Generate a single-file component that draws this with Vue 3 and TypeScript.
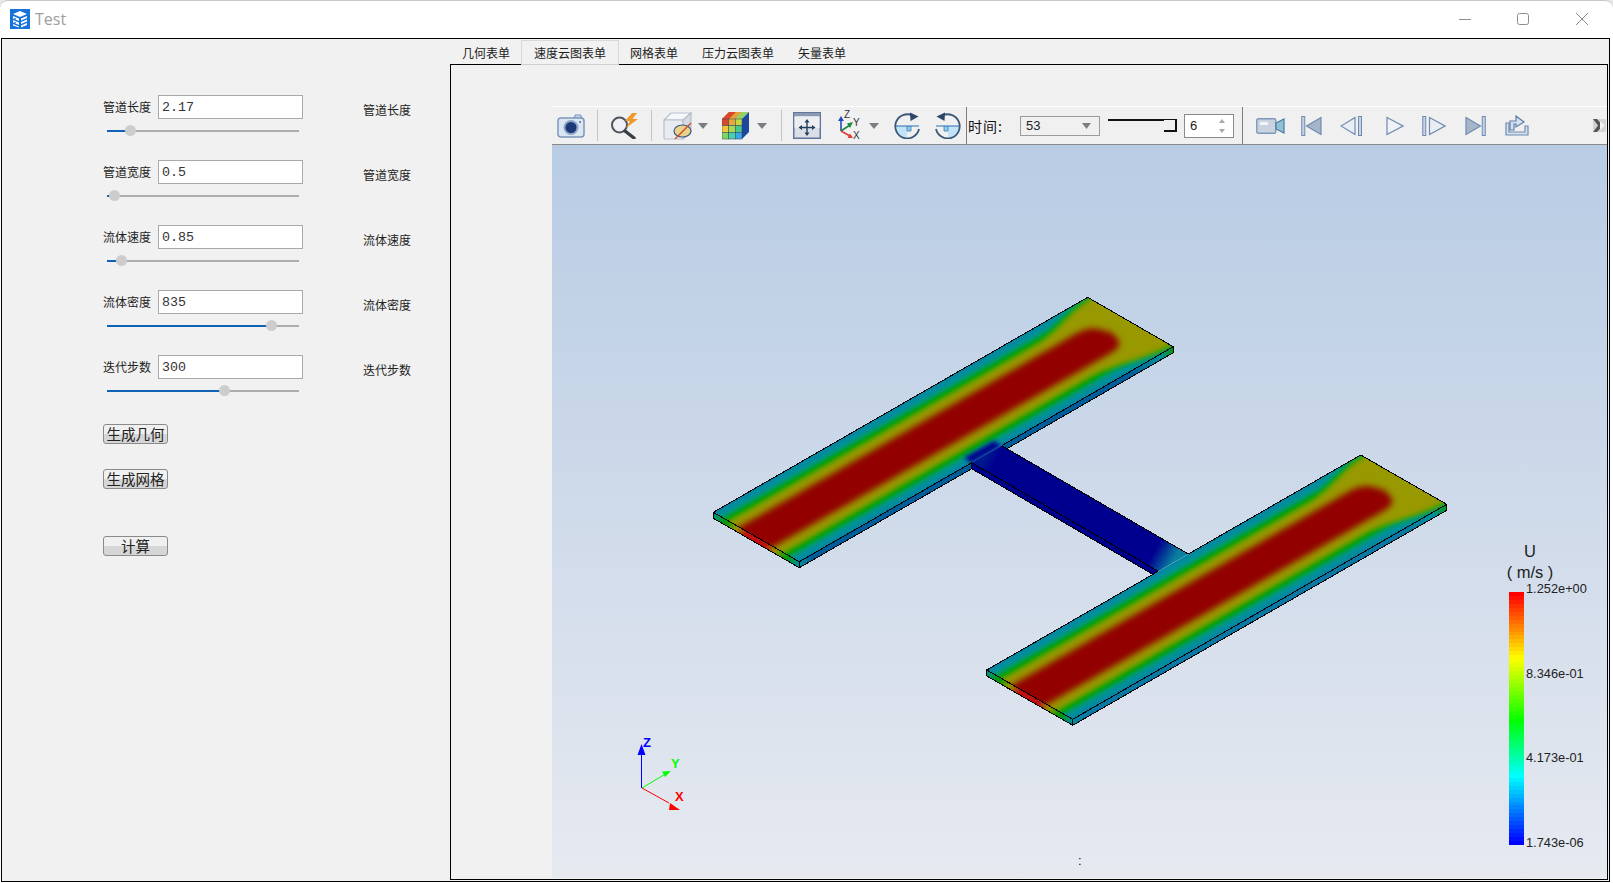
<script setup lang="ts">
type Pt = [number, number]

const params = [
  { name: '管道长度', value: '2.17', pct: 12 },
  { name: '管道宽度', value: '0.5', pct: 3.6 },
  { name: '流体速度', value: '0.85', pct: 7.3 },
  { name: '流体密度', value: '835', pct: 85.4 },
  { name: '迭代步数', value: '300', pct: 61 },
]

const tabs = ['几何表单', '速度云图表单', '网格表单', '压力云图表单', '矢量表单']
const activeTab = 1

const legendLabels = ['1.252e+00', '8.346e-01', '4.173e-01', '1.743e-06']

// colour bar, stepped like the vtk lookup table
const barStops: [number, number[]][] = [
  [0, [0, 0, 255]],
  [0.27, [0, 255, 255]],
  [0.49, [0, 255, 0]],
  [0.74, [255, 255, 0]],
  [1, [255, 0, 0]],
]

function barColor(t: number) {
  for (let i = 1; i < barStops.length; i++) {
    const [t1, c1] = barStops[i]
    const [t0, c0] = barStops[i - 1]
    if (t <= t1) {
      const k = (t - t0) / (t1 - t0)
      const c = c0.map((v, j) => Math.round(v + (c1[j] - v) * k))
      return `rgb(${c[0]}, ${c[1]}, ${c[2]})`
    }
  }
  return 'rgb(255, 0, 0)'
}

const barBands = Array.from({ length: 64 }, (_, i) => barColor(1 - i / 63))

const cubeCells = [
  '#d8492c', '#e8a838', '#c6d848',
  '#f2c63c', '#a6dc50', '#48c88c',
  '#7cd85c', '#48d0a8', '#38a8e8',
]

const mix = (a: number, b: number, k: number) => a + (b - a) * k
function smooth(a: number, b: number, u: number) {
  const k = Math.min(Math.max((u - a) / (b - a), 0), 1)
  return k * k * (3 - 2 * k)
}

// band edges measured from the long wall, u along the channel, v across it
const heatLayers: { color: string; edge: (u: number) => number }[] = [
  { color: '#008f9e', edge: (u) => mix(0.015, -0.06, smooth(0.85, 0.95, u)) },
  { color: '#00a000', edge: (u) => mix(0.095, -0.02, smooth(0.85, 1, u)) },
  { color: '#989800', edge: (u) => mix(0.195, 0.05, smooth(0.82, 1, u)) },
  {
    color: '#920000',
    edge: (u) => {
      if (u < 0.89) return 0.3
      if (u > 0.945) return 0.5
      const k = (u - 0.89) / 0.055
      return 0.3 + 0.2 * (1 - Math.cbrt(1 - k * k * k))
    },
  },
]

function makePlate(o: Pt, long: Pt, short: Pt) {
  const at = (u: number, v: number): Pt => [
    o[0] + long[0] * u + short[0] * v,
    o[1] + long[1] * u + short[1] * v,
  ]
  const str = (pts: Pt[]) => pts.map((p) => `${p[0].toFixed(1)},${p[1].toFixed(1)}`).join(' ')
  const layers = heatLayers.map((layer) => {
    const upper: Pt[] = []
    const lower: Pt[] = []
    for (let i = -5; i <= 105; i++) {
      const u = i / 100
      upper.push(at(u, layer.edge(u)))
      lower.unshift(at(u, 1 - layer.edge(u)))
    }
    return { color: layer.color, points: str([...upper, ...lower]) }
  })
  const corner = { o: at(0, 0), far: at(1, 0), right: at(1, 1), near: at(0, 1) }
  const drop = (p: Pt): Pt => [p[0], p[1] + 6]
  return {
    bands: layers.slice(0, 3),
    core: layers[3],
    corner,
    top: str([corner.o, corner.far, corner.right, corner.near]),
    endFace: str([corner.o, corner.near, drop(corner.near), drop(corner.o)]),
    wallFace: str([corner.near, corner.right, drop(corner.right), drop(corner.near)]),
  }
}

const plates = [
  {
    ...makePlate([713.3, 512.3], [374.4, -215], [86, 49.4]),
    wall: '#005d9c',
    lines:
      'M713.3 512.3 L1087.7 297.3 L1173.3 346.7 V352.7 L1001.7 451.7 M1173.3 346.7 L1001.7 445.7 M971.7 462.7 L799.3 561.7 L713.3 512.3 V518.3 L799.3 567.7 V561.7 M799.3 567.7 L971.7 468.7',
  },
  {
    ...makePlate([986.7, 670], [374, -215], [86, 49.3]),
    wall: '#0a78a4',
    lines:
      'M986.7 670 L1158.3 571.3 M1188.3 554 L1360.7 455 L1446.7 504.3 V510.3 L1072.7 725.3 L986.7 676 V670 L1072.7 719.3 L1446.7 504.3 M1072.7 719.3 V725.3',
  },
]
</script>

<template>
  <div class="window">
    <header class="titlebar">
      <svg class="logo" width="20" height="20" viewBox="0 0 20 20">
        <rect width="20" height="20" fill="#1673dc" />
        <path d="M3 5 L10 2 L17 5 L10 8 Z" fill="#fff" />
        <path d="M3 7 L9 9.5 V12 L3 9.5 Z M3 11 L9 13.5 V16 L3 13.5 Z M3 15 L9 17.5 V18.5 L3 16.5 Z" fill="#fff" />
        <path d="M11 9.5 L17 7 V9 L11 11.5 Z M11 13 L17 10.5 V12.5 L11 15 Z M11 16.5 L17 14 V16 L11 18.5 Z" fill="#fff" />
        <path d="M5 9 V10.5 M5 13 V14.5" stroke="#1673dc" stroke-width="1.4" />
      </svg>
      <span class="app-title">Test</span>
      <div class="win-controls">
        <svg width="12" height="12" viewBox="0 0 12 12" class="win-min">
          <path d="M0 6.5 H12" stroke="#8c8c8c" stroke-width="1" />
        </svg>
        <svg width="12" height="12" viewBox="0 0 12 12" class="win-max">
          <rect x="0.5" y="0.5" width="11" height="11" rx="2" fill="none" stroke="#8c8c8c" />
        </svg>
        <svg width="12" height="12" viewBox="0 0 12 12" class="win-close">
          <path d="M0 0 L12 12 M12 0 L0 12" stroke="#8c8c8c" stroke-width="1" />
        </svg>
      </div>
    </header>

    <div class="frame">
      <aside class="panel">
        <div v-for="p in params" :key="p.name" class="param">
          <label class="param-label">{{ p.name }}</label>
          <input class="param-input" :value="p.value" />
          <span class="param-side">{{ p.name }}</span>
          <div class="slider">
            <div class="slider-fill" :style="{ width: p.pct + '%' }"></div>
            <div class="slider-thumb" :style="{ left: p.pct + '%' }"></div>
          </div>
        </div>
        <button type="button" class="action action-geo">生成几何</button>
        <button type="button" class="action action-mesh">生成网格</button>
        <button type="button" class="action action-run">计算</button>
      </aside>

      <section class="workspace">
        <nav class="tabs">
          <div
            v-for="(tab, idx) in tabs"
            :key="tab"
            class="tab"
            :class="{ 'tab--active': idx === activeTab }"
          >
            {{ tab }}
          </div>
        </nav>

        <div class="pane">
          <div class="toolbar">
            <!-- camera -->
            <svg class="t-camera" width="28" height="24" viewBox="0 0 28 24">
              <path d="M17 4 L18.5 1 H23.5 L25 4" fill="#c5d5e9" stroke="#7c97bb" stroke-width="1.2" />
              <rect x="1" y="4" width="26" height="19" rx="3" fill="#dbe6f3" stroke="#7c97bb" stroke-width="1.5" />
              <circle cx="14" cy="13.5" r="7.5" fill="#8ea6c8" />
              <circle cx="14" cy="13.5" r="5.5" fill="#1c3a78" />
              <circle cx="23" cy="8" r="1" fill="#55708f" />
            </svg>
            <i class="sep t-sep1"></i>
            <!-- search with bolt -->
            <svg class="t-search" width="29" height="26" viewBox="0 0 29 26">
              <circle cx="9.5" cy="12" r="7.5" fill="#eef2f6" stroke="#50555b" stroke-width="2" />
              <path d="M15 18 L24 25" stroke="#3a3f45" stroke-width="3.4" stroke-linecap="round" />
              <path d="M22 0 L15 8 L20 8 L16 15 L28 6 L22.5 6 L27 0 Z" fill="#ee9a2a" />
            </svg>
            <i class="sep t-sep2"></i>
            <!-- clipped cube -->
            <svg class="t-cube" width="29" height="28" viewBox="0 0 29 28">
              <path d="M1 8 L8 1 H28 L20 8 Z" fill="#f6f7f9" stroke="#b7bfcd" stroke-width="1.2" />
              <path d="M20 8 L28 1 V20 L20 27 Z" fill="#d5d9e2" stroke="#b7bfcd" stroke-width="1.2" />
              <rect x="1" y="8" width="19" height="19" rx="1" fill="#e8ebf0" stroke="#b7bfcd" stroke-width="1.2" />
              <ellipse cx="19.5" cy="19" rx="8.5" ry="6" fill="#ebd28a" stroke="#3f5b86" stroke-width="1.2" />
              <path d="M12 27 L28 11" stroke="#c8482a" stroke-width="1.3" />
            </svg>
            <svg class="t-drop1" width="10" height="6" viewBox="0 0 10 6"><path d="M0 0 H10 L5 6 Z" fill="#7a7d82" /></svg>
            <!-- colour cube -->
            <svg class="t-colorcube" width="27" height="28" viewBox="0 0 27 28">
              <path d="M0 7 L7 0 H27 L20 7 Z" fill="#e2a23a" />
              <path d="M7 0 H14 L7 7 H0 Z" fill="#d8492c" />
              <path d="M20 0 H27 L20 7 H13 Z" fill="#8ed46a" />
              <path d="M20 7 L27 0 V20 L20 27 Z" fill="#1d48a0" />
              <rect
                v-for="(c, i) in cubeCells"
                :key="i"
                :x="(i % 3) * 6.67"
                :y="7 + Math.floor(i / 3) * 6.67"
                width="6.67"
                height="6.67"
                :fill="c"
                stroke="#37425a"
                stroke-width="0.5"
              />
            </svg>
            <svg class="t-drop2" width="10" height="6" viewBox="0 0 10 6"><path d="M0 0 H10 L5 6 Z" fill="#7a7d82" /></svg>
            <i class="sep t-sep3"></i>
            <!-- fit view -->
            <svg class="t-frame" width="28" height="27" viewBox="0 0 28 27">
              <rect x="0.75" y="0.75" width="26.5" height="25.5" fill="#dadee6" stroke="#61759a" stroke-width="1.5" />
              <rect x="1" y="1" width="26" height="3" fill="#8a9ab5" />
              <rect x="1.5" y="5" width="25" height="11" fill="#eceef2" />
              <path d="M14 9 V22 M7.5 15.5 H20.5" stroke="#24405f" stroke-width="1.4" />
              <path d="M14 7 L11.5 10.5 H16.5 Z M14 24 L11.5 20.5 H16.5 Z M5.5 15.5 L9 13 V18 Z M22.5 15.5 L19 13 V18 Z" fill="#24405f" />
            </svg>
            <!-- axes -->
            <svg class="t-axes" width="24" height="34" viewBox="0 -3 24 34">
              <path d="M3 20 V8" stroke="#1e4fb8" stroke-width="1.6" />
              <path d="M3 5 L0 10 H6 Z" fill="#1e4fb8" />
              <path d="M3 20 L12 14" stroke="#178a3c" stroke-width="1.6" />
              <path d="M15 11 L9 12.5 L12 17 Z" fill="#178a3c" />
              <path d="M3 20 L12 25" stroke="#e23b3b" stroke-width="1.6" />
              <path d="M15 27 L9.5 27 L12 22.5 Z" fill="#e23b3b" />
              <text x="6" y="7" class="axis-mini">Z</text>
              <text x="15" y="15" class="axis-mini">Y</text>
              <text x="15" y="28" class="axis-mini">X</text>
            </svg>
            <svg class="t-drop3" width="10" height="6" viewBox="0 0 10 6"><path d="M0 0 H10 L5 6 Z" fill="#7a7d82" /></svg>
            <!-- rotate cw / ccw -->
            <svg class="t-rot1" width="26" height="27" viewBox="0 0 26 27">
              <path d="M1 14 H13 V26 A12 12 0 0 1 1 14 Z" fill="#c2e2f6" />
              <path d="M13 14 V19 H17 V14" fill="#8fc8ec" stroke="#3a82bc" stroke-width="0.8" />
              <path d="M1 14 H25" stroke="#2a6fb0" stroke-width="1.2" />
              <path d="M25 17 A12 12 0 1 1 18.5 3.5" fill="none" stroke="#3c5878" stroke-width="1.8" />
              <path d="M16 0.5 L24.5 4.5 L16.5 9 Z" fill="#2c4668" />
            </svg>
            <svg class="t-rot2" width="26" height="27" viewBox="0 0 26 27">
              <path d="M25 14 H13 V26 A12 12 0 0 0 25 14 Z" fill="#c2e2f6" />
              <path d="M13 14 V19 H9 V14" fill="#8fc8ec" stroke="#3a82bc" stroke-width="0.8" />
              <path d="M1 14 H25" stroke="#2a6fb0" stroke-width="1.2" />
              <path d="M1 17 A12 12 0 1 0 7.5 3.5" fill="none" stroke="#3c5878" stroke-width="1.8" />
              <path d="M10 0.5 L1.5 4.5 L9.5 9 Z" fill="#2c4668" />
            </svg>
            <i class="sep-dark t-sep4"></i>
            <span class="time-label">时间:</span>
            <div class="combo">
              <span>53</span>
              <svg width="9" height="6" viewBox="0 0 9 6"><path d="M0 0 H9 L4.5 6 Z" fill="#808080" /></svg>
            </div>
            <div class="mini-slider"><div class="mini-handle"></div></div>
            <div class="spin">
              <span>6</span>
              <svg width="6" height="14" viewBox="0 0 6 14">
                <path d="M3 0 L6 4 H0 Z M3 14 L6 10 H0 Z" fill="#a8a8a8" />
              </svg>
            </div>
            <i class="sep-dark t-sep5"></i>
            <!-- playback -->
            <svg class="t-record" width="29" height="16" viewBox="0 0 29 16">
              <rect x="0.75" y="0.75" width="19" height="14.5" rx="1.5" fill="#c9d2de" stroke="#7e98ba" stroke-width="1.4" />
              <rect x="4" y="4" width="8" height="3" fill="#f2f5f9" />
              <path d="M20 5 L28 1 V15 L20 11 Z" fill="#8fc0d4" stroke="#4d7a9f" stroke-width="1.2" />
            </svg>
            <svg class="t-first" width="21" height="20" viewBox="0 0 21 20">
              <rect x="0.75" y="0.5" width="3" height="19" fill="#c6d3e4" stroke="#6f8bb0" />
              <path d="M20 1.5 L5.5 10 L20 18.5 Z" fill="#a6b5c8" stroke="#6f8bb0" stroke-width="1.2" />
            </svg>
            <svg class="t-prev" width="23" height="20" viewBox="0 0 23 20">
              <path d="M15 1.5 L1 10 L15 18.5 Z" fill="#e9eef5" stroke="#6f8bb0" stroke-width="1.2" />
              <rect x="18.5" y="0.5" width="3" height="19" fill="#c6d3e4" stroke="#6f8bb0" />
            </svg>
            <svg class="t-play" width="18" height="20" viewBox="0 0 18 20">
              <path d="M1 1.5 L17 10 L1 18.5 Z" fill="#eef2f7" stroke="#6f8bb0" stroke-width="1.2" />
            </svg>
            <svg class="t-next" width="24" height="20" viewBox="0 0 24 20">
              <rect x="0.75" y="0.5" width="3" height="19" fill="#c6d3e4" stroke="#6f8bb0" />
              <path d="M7.5 1.5 L23 10 L7.5 18.5 Z" fill="#e9eef5" stroke="#6f8bb0" stroke-width="1.2" />
            </svg>
            <svg class="t-last" width="21" height="20" viewBox="0 0 21 20">
              <path d="M1 1.5 L15.5 10 L1 18.5 Z" fill="#a6b5c8" stroke="#6f8bb0" stroke-width="1.2" />
              <rect x="17.25" y="0.5" width="3" height="19" fill="#c6d3e4" stroke="#6f8bb0" />
            </svg>
            <svg class="t-export" width="24" height="21" viewBox="0 0 24 21">
              <path d="M1 8 H4 V17 H20 V11 H23 V20 H1 Z" fill="#d5e0ed" stroke="#6f8bb0" stroke-width="1.2" />
              <path d="M5 15 V6 H11 V1 L19 7 L11 12 V9 H9 V15 Z" fill="#d5e0ed" stroke="#5f7ea8" stroke-width="1.2" />
            </svg>
            <svg class="t-more" width="13" height="13" viewBox="0 0 13 13">
              <rect width="13" height="13" fill="#d4d4d4" />
              <path d="M0 0 H4 L10 6.5 L4 13 H0 L5 6.5 Z" fill="#555" />
              <path d="M7 2 L12 6.5 L7 11 Z" fill="#f2f2f2" />
            </svg>
          </div>

          <div class="viewport">
            <svg class="scene" viewBox="552 145 1055 733">
              <defs>
                <filter id="soft" x="-10%" y="-10%" width="120%" height="120%">
                  <feGaussianBlur stdDeviation="1.9" />
                </filter>
                <filter id="softer" x="-10%" y="-10%" width="120%" height="120%">
                  <feGaussianBlur stdDeviation="3.4" />
                </filter>
                <clipPath v-for="(plate, i) in plates" :id="'plate-clip-' + i" :key="i">
                  <polygon :points="plate.top" />
                </clipPath>
                <linearGradient
                  v-for="(plate, i) in plates"
                  :id="'end-grad-' + i"
                  :key="'end' + i"
                  gradientUnits="userSpaceOnUse"
                  :x1="plate.corner.o[0]"
                  :y1="plate.corner.o[1]"
                  :x2="plate.corner.near[0]"
                  :y2="plate.corner.near[1]"
                >
                  <stop offset="0" stop-color="#008e9c" />
                  <stop offset="0.16" stop-color="#009a00" />
                  <stop offset="0.28" stop-color="#949600" />
                  <stop offset="0.4" stop-color="#c01010" />
                  <stop offset="0.62" stop-color="#c01010" />
                  <stop offset="0.74" stop-color="#949600" />
                  <stop offset="0.86" stop-color="#009a00" />
                  <stop offset="1" stop-color="#008e9c" />
                </linearGradient>
                <linearGradient
                  v-for="(plate, i) in plates"
                  :id="'wall-grad-' + i"
                  :key="'wall' + i"
                  gradientUnits="userSpaceOnUse"
                  :x1="plate.corner.near[0]"
                  :y1="plate.corner.near[1]"
                  :x2="plate.corner.right[0]"
                  :y2="plate.corner.right[1]"
                >
                  <stop offset="0" stop-color="#008a9c" />
                  <stop offset="0.03" :stop-color="plate.wall" />
                  <stop offset="0.88" :stop-color="plate.wall" />
                  <stop offset="0.96" stop-color="#008e9c" />
                  <stop offset="1" stop-color="#009a00" />
                </linearGradient>
                <linearGradient id="link-grad" gradientUnits="userSpaceOnUse" x1="987" y1="455" x2="1173" y2="562">
                  <stop offset="0" stop-color="#00188f" />
                  <stop offset="0.05" stop-color="#00008f" />
                  <stop offset="0.9" stop-color="#00008f" />
                  <stop offset="1" stop-color="#0a80a0" />
                </linearGradient>
              </defs>

              <template v-for="(plate, i) in plates" :key="i">
                <polygon :points="plate.endFace" :fill="`url(#end-grad-${i})`" />
                <polygon :points="plate.wallFace" :fill="`url(#wall-grad-${i})`" />
                <g :clip-path="`url(#plate-clip-${i})`">
                  <polygon :points="plate.top" fill="#0a7ca2" />
                  <g filter="url(#soft)">
                    <polygon v-for="l in plate.bands" :key="l.color" :points="l.points" :fill="l.color" />
                  </g>
                  <polygon :points="plate.core.points" :fill="plate.core.color" filter="url(#softer)" />
                  <polygon
                    v-if="i === 0"
                    points="1001.7,445.7 971.7,462.7 964,458 994,441"
                    fill="#00008f"
                    filter="url(#soft)"
                  />
                </g>
                <path class="edge" :d="plate.lines" />
                <template v-if="i === 0">
                  <polygon points="971.7,462.7 1158.3,571.3 1153,574.4 971.7,468.7" fill="#00008f" />
                  <polygon points="1001.7,445.7 1188.3,554 1158.3,571.3 971.7,462.7" fill="url(#link-grad)" />
                  <path class="edge" d="M1001.7 445.7 L1188.3 554 M971.7 462.7 L1158.3 571.3 M971.7 462.7 V468.7 L1153 574.4" />
                </template>
              </template>

              <!-- orientation triad -->
              <path d="M641.5 788 V752" stroke="#0000ff" stroke-width="1" />
              <path d="M641.5 744 L637.5 755 H645.5 Z" fill="#0000ff" />
              <path d="M642 788 L667 773" stroke="#00ff00" stroke-width="1" />
              <path d="M671 771 L662 771.5 L665 777 Z" fill="#00ff00" />
              <path d="M642 788 L669 803" stroke="#ff0000" stroke-width="1" />
              <path d="M680 810 L670 803 L669 810 Z" fill="#ff0000" />
              <text x="643" y="747" class="axis-label" fill="#0000ff">Z</text>
              <text x="671" y="768" class="axis-label" fill="#00ff00">Y</text>
              <text x="675" y="801" class="axis-label" fill="#ff0000">X</text>
            </svg>

            <div class="legend">
              <div class="legend-title">U<br />( m/s )</div>
              <div class="legend-body">
                <div class="legend-bar">
                  <div v-for="(c, i) in barBands" :key="i" class="legend-band" :style="{ background: c }"></div>
                </div>
                <div class="legend-labels">
                  <span v-for="l in legendLabels" :key="l">{{ l }}</span>
                </div>
              </div>
            </div>
            <span class="status-mark">:</span>
          </div>
        </div>
      </section>
    </div>
  </div>
</template>

<style scoped>
.window {
  width: 1613px;
  height: 883px;
  box-sizing: border-box;
  display: flex;
  flex-direction: column;
  background: #fff;
  border-top: 1px solid #c9c9c9;
  border-radius: 8px 8px 0 0;
  overflow: hidden;
  font-family: "Noto Sans CJK SC", "Liberation Sans", sans-serif;
}

.titlebar {
  height: 37px;
  flex: none;
  display: flex;
  align-items: center;
  padding-left: 10px;
}

.logo {
  margin-top: -1px;
}

.app-title {
  margin-left: 5px;
  font-family: "Open Sans", sans-serif;
  font-size: 16px;
  color: #a0a0a0;
  margin-top: -1px;
}

.win-controls {
  margin-left: auto;
  display: flex;
  align-items: center;
  margin-top: -1px;
}

.win-min {
  margin-right: 46px;
}

.win-max {
  margin-right: 47px;
}

.win-close {
  margin-right: 25px;
}

.frame {
  flex: 1;
  min-height: 0;
  display: flex;
  margin: 0 3px 1px 1px;
  border: 1px solid #000;
  background: #f1f1f1;
}

.panel {
  width: 448px;
  flex: none;
  box-sizing: border-box;
  padding: 56px 0 0 101px;
  display: flex;
  flex-direction: column;
  align-items: flex-start;
}

.param {
  height: 65px;
  display: grid;
  grid-template-columns: 55px 145px auto;
  grid-template-rows: 24px auto;
  align-items: center;
}

.param-label,
.param-side {
  font-size: 12px;
  color: #222;
  line-height: 24px;
}

.param-side {
  margin-left: 60px;
  padding-top: 6px;
}

.param-input {
  box-sizing: border-box;
  width: 145px;
  height: 24px;
  padding: 0 0 0 3px;
  border: 1px solid #a9a9a9;
  border-radius: 0;
  outline: none;
  background: #fff;
  font-family: "Liberation Mono", monospace;
  font-size: 13.33px;
  color: #333;
}

.slider {
  grid-column: 1 / 3;
  position: relative;
  width: 192px;
  height: 2px;
  margin: 11px 0 0 4px;
  background: #adadad;
  align-self: start;
}

.slider-fill {
  height: 100%;
  background: #0f62b5;
}

.slider-thumb {
  position: absolute;
  top: -5px;
  width: 11px;
  height: 11px;
  margin-left: -5px;
  border-radius: 50%;
  background: #cdcdcd;
}

.action {
  box-sizing: border-box;
  width: 65px;
  height: 20px;
  padding: 0;
  border: 1px solid #8a8a8a;
  border-radius: 3px;
  background: linear-gradient(#f0f0f0 50%, #d6d6d6 50%);
  font-family: "Noto Sans CJK SC", sans-serif;
  font-size: 14.5px;
  line-height: 18px;
  color: #222;
}

.action-geo {
  margin-top: 4px;
}

.action-mesh {
  margin-top: 25px;
}

.action-run {
  margin-top: 47px;
}

.workspace {
  flex: 1;
  min-width: 0;
  display: flex;
  flex-direction: column;
  padding: 0 1px 1px 0;
}

.tabs {
  height: 25px;
  flex: none;
  display: flex;
  align-items: flex-end;
}

.tab {
  height: 24px;
  box-sizing: border-box;
  padding: 0 12px;
  font-size: 12px;
  line-height: 24px;
  color: #222;
  border: 1px solid transparent;
  border-bottom: 0;
  margin: 0 -1px;
}

.tab--active {
  position: relative;
  height: 25px;
  margin-bottom: -1px;
  border-color: #d9d9d9;
  border-bottom: 1px solid #d0d0d0;
  background: #f1f1f1;
}

.pane {
  flex: 1;
  min-height: 0;
  display: flex;
  flex-direction: column;
  border: 1px solid #000;
  padding: 41px 0 1px 101px;
}

.toolbar {
  height: 39px;
  flex: none;
  box-sizing: border-box;
  display: flex;
  align-items: center;
  background: #f0f0f0;
  border-top: 1px solid #fff;
  border-bottom: 1px solid #8a8a8a;
}

.toolbar > svg {
  flex: none;
}

.sep {
  width: 1px;
  height: 31px;
  background: #c4c4c4;
  flex: none;
}

.sep-dark {
  width: 1px;
  height: 37px;
  background: #7d7d7d;
  flex: none;
}

.t-camera { margin-left: 5px; }
.t-sep1 { margin-left: 12px; }
.t-search { margin-left: 12px; }
.t-sep2 { margin-left: 12px; }
.t-cube { margin-left: 11px; }
.t-drop1 { margin-left: 6px; }
.t-colorcube { margin-left: 14px; }
.t-drop2 { margin-left: 8px; }
.t-sep3 { margin-left: 14px; }
.t-frame { margin-left: 11px; }
.t-axes { margin-left: 17px; margin-top: -1px; }
.t-drop3 { margin-left: 7px; }
.t-rot1 { margin-left: 15px; }
.t-rot2 { margin-left: 15px; }
.t-sep4 { margin-left: 5px; }
.t-sep5 { margin-left: 8px; }
.t-record { margin-left: 13px; }
.t-first { margin-left: 16px; }
.t-prev { margin-left: 18px; }
.t-play { margin-left: 23px; }
.t-next { margin-left: 18px; }
.t-last { margin-left: 19px; }
.t-export { margin-left: 19px; }
.t-more { margin-left: 64px; }

.axis-mini {
  font-family: "Liberation Sans", sans-serif;
  font-size: 10px;
  fill: #333;
}

.time-label {
  margin-left: 1px;
  width: 37px;
  flex: none;
  font-size: 14px;
  color: #111;
  letter-spacing: 1px;
  white-space: nowrap;
}

.combo {
  box-sizing: border-box;
  width: 80px;
  height: 20px;
  flex: none;
  margin-left: 15px;
  display: flex;
  align-items: center;
  justify-content: space-between;
  padding: 0 8px 0 5px;
  border: 1px solid #9c9c9c;
  font-family: "Liberation Sans", sans-serif;
  font-size: 13px;
  color: #222;
}

.mini-slider {
  position: relative;
  width: 69px;
  height: 13px;
  flex: none;
  margin-left: 8px;
  box-sizing: border-box;
  border-top: 2px solid #111;
  margin-top: -1px;
}

.mini-handle {
  position: absolute;
  right: 0;
  top: -1px;
  width: 13px;
  height: 12px;
  box-sizing: border-box;
  background: #f0f0f0;
  border-right: 2px solid #111;
  border-bottom: 2px solid #111;
}

.spin {
  box-sizing: border-box;
  width: 50px;
  height: 24px;
  flex: none;
  margin-left: 7px;
  display: flex;
  align-items: center;
  justify-content: space-between;
  padding: 0 8px 0 5px;
  background: #fff;
  border: 1px solid #8a8a8a;
  font-family: "Liberation Sans", sans-serif;
  font-size: 13px;
  color: #222;
}

.viewport {
  flex: 1;
  min-height: 0;
  position: relative;
  overflow: hidden;
  background: linear-gradient(#b8cce4, #e6e9f0);
}

.scene {
  position: absolute;
  inset: 0;
  width: 100%;
  height: 100%;
}

.edge {
  fill: none;
  stroke: #000;
  stroke-width: 1;
  shape-rendering: crispEdges;
}

.axis-label {
  font-family: "Liberation Sans", sans-serif;
  font-size: 13px;
  font-weight: 700;
}

.legend {
  position: absolute;
  left: 953px;
  top: 396px;
  font-family: "Liberation Sans", sans-serif;
  color: #222;
}

.legend-title {
  width: 50px;
  font-size: 16.5px;
  line-height: 21px;
  text-align: center;
}

.legend-body {
  display: flex;
  height: 270px;
  margin-top: -2px;
}

.legend-bar {
  width: 15px;
  height: 253px;
  margin: 11px 0 0 4px;
  display: flex;
  flex-direction: column;
  flex: none;
}

.legend-band {
  flex: 1;
}

.legend-labels {
  margin-left: 2px;
  display: flex;
  flex-direction: column;
  justify-content: space-between;
  font-size: 12.8px;
  line-height: 16px;
  white-space: nowrap;
}

.status-mark {
  position: absolute;
  left: 526px;
  top: 708px;
  font-family: "Liberation Sans", sans-serif;
  font-size: 13px;
  color: #111;
}
</style>

<style>
html,
body {
  margin: 0;
  background: #e8e8e8;
  overflow: hidden;
}
</style>
